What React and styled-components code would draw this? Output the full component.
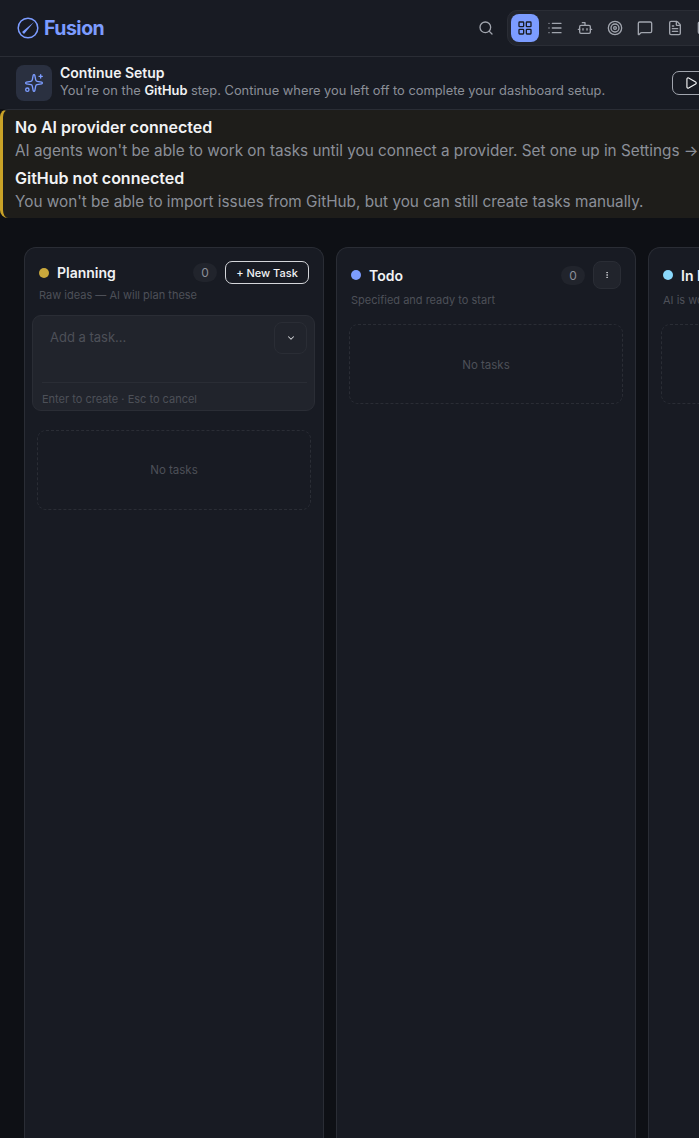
import React from 'react';
import styled, { createGlobalStyle } from 'styled-components';
import {
  Search, LayoutGrid, List, Bot, Target, MessageSquare, FileText, Folder,
  Play, Sparkles, ChevronDown, EllipsisVertical,
} from 'lucide-react';

const GlobalStyle = createGlobalStyle`
  html, body {
    margin: 0;
    height: 100%;
    overflow: hidden;
    background: #0e1015;
    font-family: Inter, "Liberation Sans", sans-serif;
    -webkit-font-smoothing: antialiased;
  }
  #root { height: 100%; }
`;

const Page = styled.div`
  height: 1138px;
  width: 699px;
  overflow: hidden;
  display: flex;
  flex-direction: column;
`;

const Header = styled.header`
  flex: none;
  height: 56px;
  display: flex;
  align-items: center;
  padding-left: 17px;
  background: #181b23;
  border-bottom: 1px solid #2a2d35;
`;

const Logo = styled.div`
  display: flex;
  align-items: center;
  gap: 5px;
  width: 455px;
  flex: none;
  color: #7c9cff;
  font-size: 19.5px;
  font-weight: 700;
  letter-spacing: -0.5px;
`;

const SearchButton = styled.button`
  flex: none;
  width: 28px;
  height: 28px;
  margin-right: 7px;
  padding: 0;
  display: flex;
  align-items: center;
  justify-content: center;
  background: none;
  border: none;
  color: #a1a5ae;
`;

const NavGroup = styled.nav`
  flex: none;
  display: flex;
  gap: 2px;
  padding: 3px;
  background: #21242c;
  border: 1px solid #2a2d35;
  border-radius: 10px;
`;

const NavButton = styled.button`
  flex: none;
  width: 28px;
  height: 28px;
  padding: 0;
  display: flex;
  align-items: center;
  justify-content: center;
  border: none;
  border-radius: 8px;
  background: ${p => (p.$active ? '#7c9cff' : 'transparent')};
  color: ${p => (p.$active ? '#181b23' : '#a1a5ae')};
`;

const SetupBanner = styled.section`
  flex: none;
  height: 52px;
  display: flex;
  align-items: center;
  padding-left: 16px;
  background: #181b23;
`;

const SetupIcon = styled.div`
  flex: none;
  width: 36px;
  height: 36px;
  display: flex;
  align-items: center;
  justify-content: center;
  border-radius: 8px;
  background: #2a3040;
  color: #7c9cff;
`;

const SetupText = styled.div`
  flex: none;
  width: 612px;
  margin-left: 8px;
  margin-top: -4px;
`;

const SetupTitle = styled.div`
  color: #f1f2f4;
  font-size: 14px;
  font-weight: 600;
  line-height: 17px;
`;

const SetupSub = styled.div`
  margin-top: 1px;
  color: #8b8f98;
  font-size: 12.85px;
  line-height: 17px;
  white-space: nowrap;
  b { color: #f1f2f4; font-weight: 600; }
`;

const ResumeButton = styled.button`
  flex: none;
  width: 60px;
  height: 24px;
  padding: 0 0 0 11px;
  display: flex;
  align-items: center;
  background: none;
  border: 1px solid #a1a5ae;
  border-radius: 7px;
  color: #f1f2f4;
`;

const Warning = styled.section`
  flex: none;
  height: 109px;
  box-sizing: border-box;
  padding: 5px 0 0 12px;
  background: #1e1d1a;
  border-top: 1px solid #2a2d35;
  border-left: 3px solid #c9a227;
  border-radius: 8px 0 0 8px;
`;

const WarningTitle = styled.div`
  color: #f1f2f4;
  font-size: 16px;
  font-weight: 600;
  line-height: 24px;
  white-space: nowrap;
`;

const WarningText = styled.div`
  color: #8b8f98;
  font-size: 15.3px;
  line-height: 24px;
  margin-bottom: 3px;
  white-space: nowrap;
`;

const Board = styled.main`
  flex: 1;
  min-height: 0;
  display: flex;
  gap: 12px;
  padding: 29px 0 0 24px;
  background: #0e1015;
`;

const Column = styled.section`
  flex: none;
  width: 300px;
  box-sizing: border-box;
  padding: 13px 12px 0;
  background: #181b23;
  border: 1px solid #2a2d35;
  border-bottom: none;
  border-radius: 12px 12px 0 0;
`;

const ColumnHead = styled.div`
  display: flex;
  align-items: center;
  padding: 0 2px;
  min-height: 23px;
`;

const Dot = styled.span`
  flex: none;
  width: 10px;
  height: 10px;
  border-radius: 50%;
  background: ${p => p.$color};
`;

const ColumnTitle = styled.h2`
  flex: 1;
  margin: 0 0 0 8px;
  color: #f1f2f4;
  font-size: 14px;
  font-weight: 600;
  white-space: nowrap;
`;

const Count = styled.span`
  flex: none;
  width: 24px;
  height: 19px;
  margin-right: 8px;
  display: flex;
  align-items: center;
  justify-content: center;
  border-radius: 10px;
  background: #21242c;
  color: #8b8f98;
  font-size: 12px;
`;

const NewTask = styled.button`
  flex: none;
  width: 84px;
  height: 23px;
  padding: 0;
  background: none;
  border: 1px solid #d4d6da;
  border-radius: 7px;
  color: #f1f2f4;
  font: 500 11px Inter, sans-serif;
`;

const MenuButton = styled.button`
  flex: none;
  width: 28px;
  height: 28px;
  padding: 0;
  display: flex;
  align-items: center;
  justify-content: center;
  background: #21242c;
  border: 1px solid #2a2d35;
  border-radius: 8px;
  color: #d4d6da;
`;

const ColumnSub = styled.p`
  margin: 4px 0 0 2px;
  height: 14px;
  color: #4d5058;
  font-size: 11px;
  line-height: 14px;
  white-space: nowrap;
`;

const QuickAdd = styled.div`
  margin: 13px -4px 19px -5px;
  height: 96px;
  box-sizing: border-box;
  padding: 6px 7px 0 9px;
  background: #21242c;
  border: 1px solid #2a2d35;
  border-radius: 9px;
`;

const QuickRow = styled.div`
  display: flex;
  justify-content: space-between;
  height: 60px;
  border-bottom: 1px solid #2a2d35;
`;

const Placeholder = styled.span`
  margin: 7px 0 0 8px;
  color: #4d5058;
  font-size: 13px;
  line-height: 16px;
`;

const ChevronButton = styled.button`
  flex: none;
  width: 33px;
  height: 32px;
  padding: 0;
  display: flex;
  align-items: center;
  justify-content: center;
  background: none;
  border: 1px solid #2a2d35;
  border-radius: 8px;
  color: #d4d6da;
`;

const QuickHint = styled.div`
  margin-top: 9px;
  color: #4d5058;
  font-size: 11px;
  line-height: 14px;
`;

const Empty = styled.div`
  height: 80px;
  box-sizing: border-box;
  margin-top: ${p => (p.$flush ? '0' : '17px')};
  padding-top: ${p => (p.$flush ? '0' : '2px')};
  display: flex;
  align-items: center;
  justify-content: center;
  border: 1px dashed #2a2d35;
  border-radius: 9px;
  color: #4d5058;
  font-size: 11.5px;
  white-space: nowrap;
`;

const FusionMark = () => (
  <svg width="22" height="22" viewBox="0 0 22 22" fill="none" stroke="currentColor" strokeWidth="1.5">
    <circle cx="11" cy="11" r="9.8" />
    <path d="M17 5 L5 15 L7 17 Z" fill="currentColor" stroke="none" />
  </svg>
);

const navItems = [LayoutGrid, List, Bot, Target, MessageSquare, FileText, Folder];

export default function App() {
  return (
    <Page>
      <GlobalStyle />
      <Header>
        <Logo><FusionMark />Fusion</Logo>
        <SearchButton><Search size={16} /></SearchButton>
        <NavGroup>
          {navItems.map((Icon, i) => (
            <NavButton key={i} $active={i === 0}><Icon size={16} /></NavButton>
          ))}
        </NavGroup>
      </Header>

      <SetupBanner>
        <SetupIcon><Sparkles size={20} strokeWidth={1.6} /></SetupIcon>
        <SetupText>
          <SetupTitle>Continue Setup</SetupTitle>
          <SetupSub>You're on the <b>GitHub</b> step. Continue where you left off to complete your dashboard setup.</SetupSub>
        </SetupText>
        <ResumeButton><Play size={14} /></ResumeButton>
      </SetupBanner>

      <Warning>
        <WarningTitle>No AI provider connected</WarningTitle>
        <WarningText>AI agents won't be able to work on tasks until you connect a provider. Set one up in Settings →</WarningText>
        <WarningTitle>GitHub not connected</WarningTitle>
        <WarningText>You won't be able to import issues from GitHub, but you can still create tasks manually.</WarningText>
      </Warning>

      <Board>
        <Column>
          <ColumnHead>
            <Dot $color="#c9a83c" />
            <ColumnTitle>Planning</ColumnTitle>
            <Count>0</Count>
            <NewTask>+ New Task</NewTask>
          </ColumnHead>
          <ColumnSub>Raw ideas — AI will plan these</ColumnSub>
          <QuickAdd>
            <QuickRow>
              <Placeholder>Add a task...</Placeholder>
              <ChevronButton><ChevronDown size={10} strokeWidth={2.5} /></ChevronButton>
            </QuickRow>
            <QuickHint>Enter to create · Esc to cancel</QuickHint>
          </QuickAdd>
          <Empty $flush>No tasks</Empty>
        </Column>

        <Column>
          <ColumnHead>
            <Dot $color="#7c9cff" />
            <ColumnTitle>Todo</ColumnTitle>
            <Count>0</Count>
            <MenuButton><EllipsisVertical size={8} strokeWidth={2.5} /></MenuButton>
          </ColumnHead>
          <ColumnSub>Specified and ready to start</ColumnSub>
          <Empty>No tasks</Empty>
        </Column>

        <Column>
          <ColumnHead>
            <Dot $color="#8ad8fb" />
            <ColumnTitle>In Progress</ColumnTitle>
            <Count>0</Count>
            <MenuButton><EllipsisVertical size={8} strokeWidth={2.5} /></MenuButton>
          </ColumnHead>
          <ColumnSub>AI is working on these</ColumnSub>
          <Empty>No tasks</Empty>
        </Column>
      </Board>
    </Page>
  );
}
